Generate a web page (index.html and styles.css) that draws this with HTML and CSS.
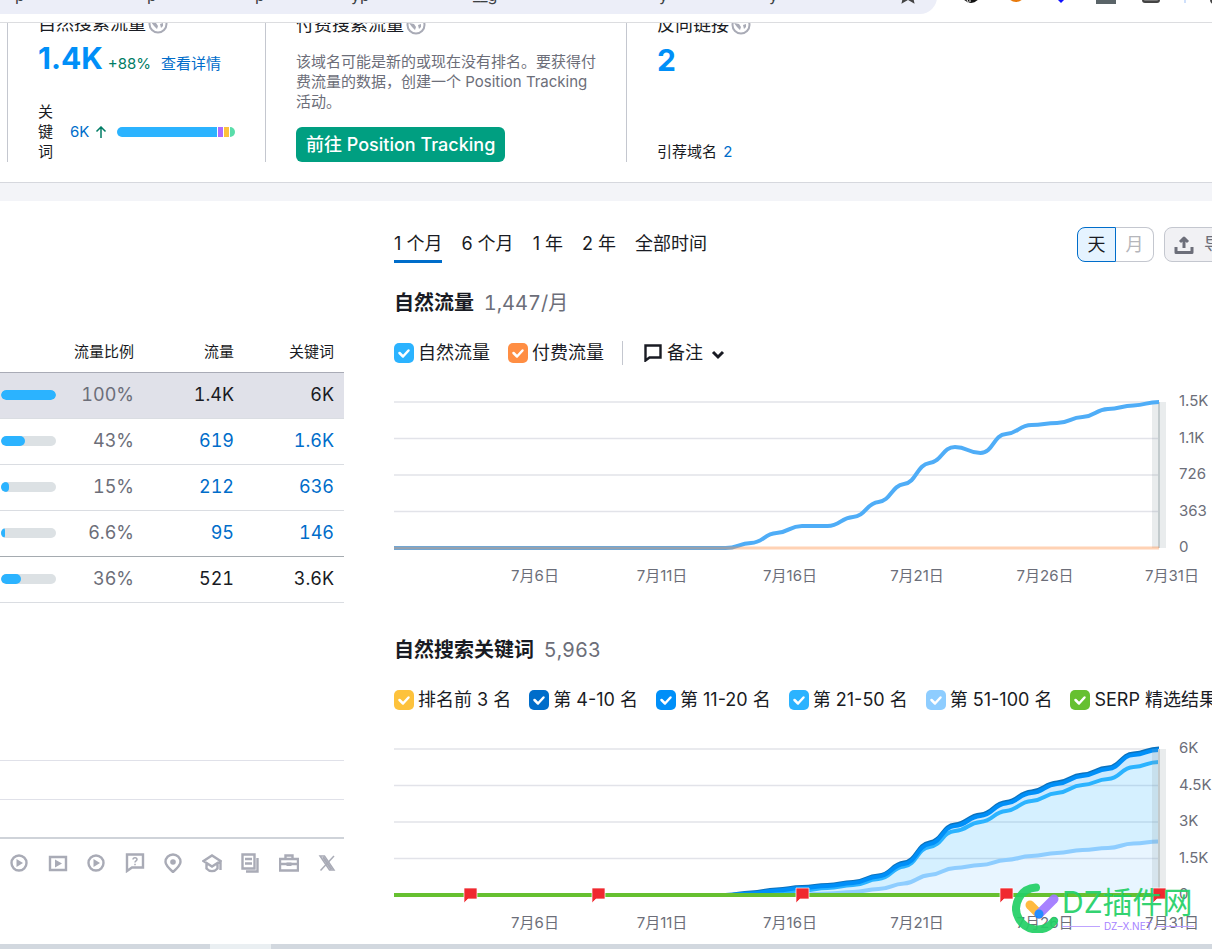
FILE: index.html
```html
<!DOCTYPE html>
<html lang="zh-CN">
<head>
<meta charset="utf-8">
<meta name="viewport" content="width=device-width, initial-scale=1">
<title>域名概览</title>
<link rel="stylesheet" href="styles.css">
</head>
<body>
<div class="toolbar">
  <div class="address">
    <div class="address-text"><span>p</span><span>p</span><span>p</span><span>yp</span><span>__g</span><span>y</span><span>y</span></div>
    <svg class="star" viewBox="0 0 20 20"><path d="M10 2l2.400 5.400 5.900.6-4.500 4 1.300 5.800L10 14.800l-5.100 3 1.300-5.800-4.500-4 5.900-.6z"/></svg>
  </div>
  <div class="extensions">
    <svg viewBox="0 0 24 24"><circle cx="12" cy="13" r="9" fill="#111"/><path d="M8 19l1.500 2.500M11 18v3" stroke="#fff" stroke-width="1"/></svg>
    <svg viewBox="0 0 24 24"><circle cx="12" cy="12" r="9" fill="#e87a0c"/></svg>
    <svg viewBox="0 0 24 24"><path d="M12 4l9 9-9 9-9-9z" fill="#1010ff"/></svg>
    <svg viewBox="0 0 24 24"><path d="M2 3h20v20H2z" fill="#5a6468"/></svg>
    <svg viewBox="0 0 24 24"><rect x="4" y="4" width="16" height="17" rx="2" fill="#777" stroke="#444" stroke-width="2"/></svg>
    <span class="toolbar-rule"></span>
    <svg viewBox="0 0 24 24"><rect x="4" y="4" width="16" height="18" rx="3" fill="none" stroke="#444" stroke-width="2"/></svg>
  </div>
</div>

<section class="summary">
  <div class="metric">
    <h3 class="metric-title">自然搜索流量 <svg class="globe" viewBox="0 0 20 20"><circle cx="10" cy="10" r="8.500"/><path d="M3 8l5 1 2 3-1 3-3-3zM10 3l1 4 3 1 1-3M12 10l3-1v3l-2 2z"/></svg></h3>
    <p class="metric-main"><strong>1.4K</strong><span class="growth">+88%</span><a href="#details">查看详情</a></p>
    <div class="keywords">
      <span class="keywords-label">关键词</span>
      <a href="#keywords">6K</a>
      <svg class="up" viewBox="0 0 12 12"><path d="M6 12V1M1.500 5.500L6 1l4.500 4.500"/></svg>
      <div class="split"><i class="split-blue"></i><i class="split-purple"></i><i class="split-yellow"></i><i class="split-green"></i></div>
    </div>
  </div>
  <div class="metric">
    <h3 class="metric-title">付费搜索流量 <svg class="globe" viewBox="0 0 20 20"><circle cx="10" cy="10" r="8.500"/><path d="M3 8l5 1 2 3-1 3-3-3zM10 3l1 4 3 1 1-3M12 10l3-1v3l-2 2z"/></svg></h3>
    <p class="hint">该域名可能是新的或现在没有排名。要获得付费流量的数据，创建一个 Position Tracking 活动。</p>
    <button class="primary" type="button">前往 Position Tracking</button>
  </div>
  <div class="metric">
    <h3 class="metric-title">反向链接 <svg class="globe" viewBox="0 0 20 20"><circle cx="10" cy="10" r="8.500"/><path d="M3 8l5 1 2 3-1 3-3-3zM10 3l1 4 3 1 1-3M12 10l3-1v3l-2 2z"/></svg></h3>
    <p class="metric-main"><strong>2</strong></p>
    <p class="referring">引荐域名 <a href="#domains">2</a></p>
  </div>
</section>

<main class="report">
  <div class="side">
    <table class="countries">
      <thead><tr><th class="bar-col"></th><th>流量比例</th><th>流量</th><th>关键词</th></tr></thead>
      <tbody>
        <tr class="selected"><td><div class="bar"><i style="width:100%"></i></div></td><td class="share">100%</td><td>1.4K</td><td>6K</td></tr>
        <tr><td><div class="bar"><i style="width:43%"></i></div></td><td class="share">43%</td><td><a href="#c1">619</a></td><td><a href="#k1">1.6K</a></td></tr>
        <tr><td><div class="bar"><i style="width:15%"></i></div></td><td class="share">15%</td><td><a href="#c2">212</a></td><td><a href="#k2">636</a></td></tr>
        <tr class="last-country"><td><div class="bar"><i style="width:6.6%"></i></div></td><td class="share">6.6%</td><td><a href="#c3">95</a></td><td><a href="#k3">146</a></td></tr>
        <tr><td><div class="bar"><i style="width:36%"></i></div></td><td class="share">36%</td><td>521</td><td>3.6K</td></tr>
      </tbody>
    </table>
    <div class="serp">
      <div class="serp-line"></div>
      <div class="serp-line"></div>
      <div class="serp-line serp-axis"></div>
      <div class="serp-icons">
        <svg viewBox="0 0 20 20"><circle cx="10" cy="10" r="7.500"/><path class="solid" d="M7.500 6l6.500 4-6.500 4z"/></svg>
        <svg viewBox="0 0 20 20"><path d="M2 4h16v13H2z"/><path class="solid" d="M7 6.500l7 4-7 4z"/></svg>
        <svg viewBox="0 0 20 20"><circle cx="10" cy="10" r="7.500"/><path class="solid" d="M7.500 6l6.500 4-6.500 4z"/></svg>
        <svg viewBox="0 0 20 20"><path d="M2 1.500h16v13H7L2 18z"/><path class="thin" d="M8 6.500c0-2.500 4-2.500 4 0 0 1.500-2 1.300-2 3M10 10.800v1.400"/></svg>
        <svg viewBox="0 0 20 20"><path d="M10 19C5 14.500 2.500 12 2.500 9a7.500 7.500 0 0 1 15 0c0 3-2.500 5.500-7.500 10z"/><circle class="solid" cx="10" cy="9" r="2.800"/></svg>
        <svg viewBox="0 0 20 20"><path d="M1.500 8L10 2.500 18.500 8 10 13.500zM4.500 11v4.500c3 3.500 8 3.500 11 0V11M18.500 8v9"/></svg>
        <svg viewBox="0 0 20 20"><path d="M2.500 1.500h12v14h-12zM5 6h7M5 10.500h7M17.500 5v13.500H6"/></svg>
        <svg viewBox="0 0 20 20"><path d="M1 6h18v11.500H1zM6.500 6V2.500h7V6M1 11h18"/><path class="solid" d="M7.500 9.500h5v3.500h-5z"/></svg>
        <svg viewBox="0 0 20 20"><path class="thin" d="M17 3L3.500 17.500"/><path class="thin" d="M3 3h4.500l9.500 14h-4.500z"/><path d="M6 4l8.500 12.500"/></svg>
      </div>
    </div>
  </div>

  <div class="charts">
    <div class="controls">
      <div class="tabs" role="tablist">
        <button class="tab active" type="button">1 个月</button>
        <button class="tab" type="button">6 个月</button>
        <button class="tab" type="button">1 年</button>
        <button class="tab" type="button">2 年</button>
        <button class="tab" type="button">全部时间</button>
      </div>
      <div class="switch">
        <button class="switch-on" type="button">天</button><button class="switch-off" type="button" disabled>月</button>
      </div>
      <button class="export" type="button"><svg viewBox="0 0 20 20"><path d="M10 13V3M6 7l4-4 4 4M2 12v5.500h16V12"/></svg>导出</button>
    </div>

    <section class="chart-block">
      <h2>自然流量 <span>1,447/月</span></h2>
      <div class="legend">
        <label><input type="checkbox" class="c-sky" checked>自然流量</label>
        <label><input type="checkbox" class="c-orange" checked>付费流量</label>
        <button class="notes" type="button"><svg class="note-icon" viewBox="0 0 18 18"><path d="M1.500 1.500h15v12H5.500l-4 3z"/></svg>备注<svg class="chevron" viewBox="0 0 14 14"><path d="M2 6l5 5 5-5"/></svg></button>
      </div>
      <svg class="chart" viewBox="0 0 818 206">
        <path class="grid" d="M0 17h765M0 53.500h765M0 90h765M0 126.500h765"/>
        <path class="band" d="M758 17h14v146h-14z"/>
        <path class="cursor" d="M765 17v146"/>
        <path class="line traffic" data-start="0" data-y="163,163,163,163,163,163,163,163,163,163,163,163,163,163,158,148,141,141,132,117,99,78,62,68,49,40,38,32,24,20.5,17"/>
        <path class="paid" d="M0 163h765"/>
        <g class="axis"><text x="785" y="21">1.5K</text><text x="785" y="58">1.1K</text><text x="785" y="94">726</text><text x="785" y="131">363</text><text x="785" y="167">0</text></g>
        <g class="axis days"><text x="141" y="196">7月6日</text><text x="268" y="196">7月11日</text><text x="396" y="196">7月16日</text><text x="523" y="196">7月21日</text><text x="651" y="196">7月26日</text><text x="778" y="196">7月31日</text></g>
      </svg>
    </section>

    <section class="chart-block">
      <h2>自然搜索关键词 <span>5,963</span></h2>
      <div class="legend">
        <label><input type="checkbox" class="c-yellow" checked>排名前 3 名</label>
        <label><input type="checkbox" class="c-navy" checked>第 4-10 名</label>
        <label><input type="checkbox" class="c-blue" checked>第 11-20 名</label>
        <label><input type="checkbox" class="c-sky" checked>第 21-50 名</label>
        <label><input type="checkbox" class="c-pale" checked>第 51-100 名</label>
        <label><input type="checkbox" class="c-green" checked>SERP 精选结果</label>
      </div>
      <div class="chart-wrap">
        <svg class="chart" viewBox="0 0 818 206">
          <path class="grid" d="M0 17h765M0 53.500h765M0 90h765M0 126.500h765"/>
          <path class="area top" data-start="13" data-lower="l50" data-y="163,161.500,158.500,156,154,151,144.500,132,112,94,84,71.500,61,52,44,37,23,18"/>
          <path class="area mid" data-start="13" data-lower="l100" data-y="163,162.500,160.500,158.500,156,153,147,134.500,115,99,90,79,69,61,53,47,35,30"/>
          <path class="area low" data-start="13" data-y="163,163,163,162.500,161.500,160,157,151.500,143,136,133,128,124,121,118,116,111.500,109.500"/>
          <path class="line edge" data-start="13" data-y="163,160.500,157.500,155,153,150,143.500,130.500,110.500,92.500,82.500,70,59.500,50.500,42.500,35.500,21.500,16.500"/>
          <path class="line pale" id="l100" data-start="13" data-y="163,163,163,162.500,161.500,160,157,151.500,143,136,133,128,124,121,118,116,111.500,109.500"/>
          <path class="line sky" id="l50" data-start="13" data-y="163,162.500,160.500,158.500,156,153,147,134.500,115,99,90,79,69,61,53,47,35,30"/>
          <path class="line blue" data-start="13" data-y="163,161.500,158.500,156,154,151,144.500,132,112,94,84,71.500,61,52,44,37,23,18"/>
          <path class="band" d="M758 17h14v146h-14z"/>
          <path class="cursor" d="M765 17v146"/>
          <path class="features" d="M0 163h765"/>
          <g class="flags">
            <path d="M70 156h13v11H74l-4 4z"/><path d="M198 156h13v11h-9l-4 4z"/><path d="M402 156h13v11h-9l-4 4z"/><path d="M606 156h13v11h-9l-4 4z"/><path d="M759 156h13v11h-9l-4 4z"/>
          </g>
          <g class="axis"><text x="785" y="21">6K</text><text x="785" y="58">4.5K</text><text x="785" y="94">3K</text><text x="785" y="131">1.5K</text><text x="785" y="167">0</text></g>
          <g class="axis days"><text x="141" y="196">7月6日</text><text x="268" y="196">7月11日</text><text x="396" y="196">7月16日</text><text x="523" y="196">7月21日</text><text x="651" y="196">7月26日</text><text x="778" y="196">7月31日</text></g>
        </svg>
        <div class="watermark">
          <svg viewBox="0 0 50 50"><path d="M24 4.500A21 21 0 1 0 42 38" fill="none" stroke="#22d066" stroke-width="8" stroke-linecap="round"/><path d="M18 22l9 9" stroke="#ffb530" stroke-width="9" stroke-linecap="round"/><path d="M27 31l15-15" stroke="#a078ff" stroke-width="9" stroke-linecap="round"/><circle cx="27" cy="31" r="4.500" fill="#1484ff"/></svg>
          <div class="watermark-text"><b>DZ插件网</b><small>DZ–X.NET</small></div>
        </div>
      </div>
    </section>
  </div>
</main>
<div class="taskbar"><i></i></div>
<script src="charts.js"></script>
</body>
</html>
```

FILE: styles.css
```css
* { box-sizing: border-box; }

body {
  margin: 0;
  min-height: 100vh;
  display: flex;
  flex-direction: column;
  overflow: hidden;
  background: #fff;
  color: #191b23;
  font-family: Inter, "Noto Sans CJK SC", sans-serif;
  font-size: 15px;
  line-height: 20px;
}

a { color: #006dca; text-decoration: none; }
button, input { font: inherit; color: inherit; margin: 0; }
button { cursor: pointer; }
h2, h3, p { margin: 0; }
svg { display: block; flex: none; }

/* Browser toolbar, scrolled partly out of view */
.toolbar {
  height: 43px;
  margin-top: -20px;
  display: flex;
  border-bottom: 1px solid #dcdde0;
}
.address {
  flex: 0 0 937px;
  height: 34px;
  padding-right: 19px;
  display: flex;
  justify-content: space-between;
  background: #eceef8;
  border-radius: 0 17px 17px 0;
}
.address-text {
  display: grid;
  grid-template-columns: 132px 108px 96px 122px 186px 110px 20px;
  padding-left: 15px;
  color: #3c4043;
  font-size: 16px;
  line-height: 30px;
}
.star { width: 20px; height: 20px; margin-top: 4px; fill: none; stroke: #444; stroke-width: 2; }
.extensions { display: flex; gap: 21px; padding: 1px 0 0 22px; }
.extensions svg { width: 24px; height: 24px; }
.toolbar-rule { width: 2px; height: 22px; background: #cfe0fb; }

/* Domain summary */
.summary {
  display: grid;
  grid-template-columns: 258px 361px 1fr;
  padding: 0 0 20px 7px;
  border-bottom: 1px solid #d6d8de;
  overflow: hidden;
}
.metric {
  height: 139px;
  padding: 0 30px;
  border-left: 1px solid #c4c7cf;
  display: flex;
  flex-direction: column;
}
.metric-title {
  display: flex;
  align-items: center;
  gap: 2px;
  height: 22px;
  margin-top: -9px;
  font-size: 18px;
  font-weight: 400;
}
.globe { width: 20px; height: 20px; fill: #a9abb6; }
.globe circle { fill: none; stroke: #a9abb6; stroke-width: 2; }
.metric-main { display: flex; align-items: baseline; margin-top: 8px; line-height: 32px; }
.metric-main strong { color: #008ff8; font-size: 30px; font-weight: 700; }
.metric-main a { margin-left: 10px; }
.growth { margin-left: 5px; color: #007c65; }
.keywords { display: flex; align-items: center; margin-top: 22px; height: 60px; }
.keywords-label { width: 15px; margin-right: 17px; }
.up { width: 12px; height: 12px; margin: 0 10px 0 6px; fill: none; stroke: #007c65; stroke-width: 1.500; }
.split { display: flex; gap: 1px; width: 118px; height: 10px; border-radius: 5px; overflow: hidden; }
.split i { width: 5px; }
.split .split-blue { flex: 1; background: #2bb3ff; }
.split-purple { background: #ab6cfe; }
.split-yellow { background: #fdc23c; }
.split-green { background: #59ddaa; }
.hint { margin-top: 16px; color: #6c6e79; }
.primary {
  align-self: flex-start;
  height: 35px;
  margin-top: auto;
  padding: 0 10px;
  border: 0;
  border-radius: 6px;
  background: #009f81;
  color: #fff;
  font-size: 18px;
  font-weight: 500;
}
.referring { margin-top: auto; }
.referring a { margin-left: 2px; }

/* Report */
.report {
  flex: 1;
  display: grid;
  grid-template-columns: 344px minmax(0, 1fr);
  gap: 50px;
  border-top: 18px solid #f3f4f8;
  padding-top: 26px;
}
.side { padding-top: 104px; }
.countries {
  width: 100%;
  border-collapse: collapse;
  table-layout: fixed;
  font-variant-numeric: tabular-nums;
}
.countries th {
  height: 41px;
  padding: 2px 10px 0 0;
  border-bottom: 1px solid #a9abb6;
  font-weight: 400;
  text-align: right;
  white-space: nowrap;
}
.countries .bar-col { width: 57px; }
.countries th:nth-child(2) { width: 87px; }
.countries th:nth-child(3) { width: 100px; }
.countries td {
  height: 46px;
  padding: 0 10px 0 0;
  border-bottom: 1px solid #dadde2;
  font-size: 18px;
  text-align: right;
}
.countries td:first-child { padding: 0 1px; }
.countries .share { color: #6c6e79; }
.selected { background: #e0e1e9; }
.countries .last-country td { border-bottom-color: #a5abb0; }
.bar { height: 10px; border-radius: 5px; background: #dce1e4; overflow: hidden; }
.bar i { display: block; height: 10px; border-radius: 5px; background: #2bb3ff; }

.serp { margin-top: 119px; }
.serp-line { height: 39px; border-bottom: 1px solid #e0e1e9; }
.serp-axis { border-bottom: 2px solid #cfd3d9; }
.serp-icons { display: flex; justify-content: space-between; padding: 14px 7px 0 9px; }
.serp-icons svg { width: 20px; height: 20px; fill: none; stroke: #a9abb6; stroke-width: 2.400; }
.serp-icons .solid { fill: #a9abb6; stroke: none; }
.serp-icons .thin { stroke-width: 1.500; }

.controls {
  display: flex;
  align-items: flex-start;
  gap: 10px;
  height: 35px;
  margin-right: -48px;
  font-size: 18px;
}
.tabs { display: flex; flex: 1; gap: 19px; }
.tab { height: 36px; padding: 0; border: 0; border-bottom: 3px solid transparent; background: none; }
.tab.active { border-bottom-color: #006dca; }
.switch { display: flex; }
.switch button { width: 39px; height: 35px; padding: 0; border: 1px solid #c4c7cf; background: #fff; }
.switch .switch-on { border-color: #006dca; border-radius: 8px 0 0 8px; background: #e5f3ff; }
.switch .switch-off { width: 38px; border-left: 0; border-radius: 0 8px 8px 0; color: #b5b6bb; }
.export {
  display: flex;
  align-items: center;
  gap: 10px;
  width: 96px;
  height: 35px;
  padding: 0 9px;
  border: 1px solid #c4c7cf;
  border-radius: 8px;
  background: #f1f1f4;
  color: #6c6e79;
  white-space: nowrap;
}
.export svg { width: 20px; height: 20px; fill: none; stroke: #6c6e79; stroke-width: 3; stroke-linejoin: round; }

.chart-block { padding-top: 27px; }
.chart-block + .chart-block { padding-top: 45px; }
.chart-block h2 { font-size: 20px; font-weight: 700; line-height: 28px; }
.chart-block h2 span {
  margin-left: 5px;
  color: #6c6e79;
  font-weight: 400;
  font-variant-numeric: tabular-nums;
}
.legend {
  display: flex;
  gap: 18px;
  height: 24px;
  margin: 24px 0 20px;
  font-size: 18px;
  line-height: 24px;
  white-space: nowrap;
}
.legend label { display: flex; align-items: center; gap: 4px; }
.legend input {
  appearance: none;
  width: 20px;
  height: 20px;
  border-radius: 5px;
  background: center / 20px url("data:image/svg+xml,%3Csvg xmlns='http://www.w3.org/2000/svg' viewBox='0 0 20 20'%3E%3Cpath d='M5.500 10l3.500 3.500 5.500-6' fill='none' stroke='white' stroke-width='2.500' stroke-linecap='round' stroke-linejoin='round'/%3E%3C/svg%3E");
}
.legend .c-sky { background-color: #2bb3ff; }
.legend .c-orange { background-color: #ff8e43; }
.legend .c-yellow { background-color: #fdc23c; }
.legend .c-navy { background-color: #006dca; }
.legend .c-blue { background-color: #008ff8; }
.legend .c-pale { background-color: #8ecdff; }
.legend .c-green { background-color: #66c030; }
.notes {
  display: flex;
  align-items: center;
  gap: 5px;
  padding: 0 0 0 21px;
  border: 0;
  border-left: 1px solid #c4c7cf;
  background: none;
}
.note-icon { width: 18px; height: 18px; fill: none; stroke: #191b23; stroke-width: 2.400; }
.chevron { width: 14px; height: 14px; margin-left: 3px; fill: none; stroke: #191b23; stroke-width: 3; }

.chart { width: 100%; overflow: visible; }
.grid { fill: none; stroke: #e2e3e9; stroke-width: 1.500; }
.band { fill: #8a9a9d; fill-opacity: 0.19; }
.cursor { stroke: #c3cbcd; stroke-width: 2; }
.line { fill: none; stroke-width: 4; }
.traffic { stroke: #4fadf7; }
.paid { stroke: #ff8e43; stroke-opacity: 0.4; stroke-width: 3; }
.area { stroke: none; }
.area.top { fill: #008ff8; fill-opacity: 0.2; }
.area.mid { fill: #2bb3ff; fill-opacity: 0.2; }
.area.low { fill: #8ecdff; fill-opacity: 0.2; }
.edge { stroke: #0c72bd; }
.blue { stroke: #008ff8; }
.sky { stroke: #2bb3ff; }
.pale { stroke: #8ecdff; }
.features { stroke: #66c030; stroke-width: 4; }
.flags { fill: #f0292f; stroke: #fff; stroke-opacity: 0.7; stroke-width: 1; }
.axis { fill: #6c6e79; font-size: 15px; }
.days { text-anchor: middle; }

.chart-wrap { position: relative; }
.watermark { position: absolute; right: 18px; top: 151px; display: flex; opacity: 0.92; }
.watermark svg { width: 50px; height: 50px; }
.watermark-text { display: flex; flex-direction: column; width: 132px; white-space: nowrap; }
.watermark-text b { color: #22d066; font-size: 30px; font-weight: 400; line-height: 38px; }
.watermark-text small {
  display: flex;
  align-items: center;
  gap: 4px;
  color: #a078ff;
  font-size: 10px;
  line-height: 10px;
}
.watermark-text small::before, .watermark-text small::after { content: ""; flex: 1; height: 1px; background: #b99cff; }

.taskbar { height: 5px; background: #d2d8df; }
.taskbar i { display: block; width: 61px; height: 5px; margin-left: 210px; background: #eaeff2; }
```

FILE: charts.js
```js
// Builds the smoothed chart curves from the daily values held in data-y.
const STEP = 25.5;
const BASE = 163;

function points(el) {
  const start = Number(el.dataset.start);
  return el.dataset.y.split(",").map((y, i) => [(start + i) * STEP, Number(y)]);
}

function curve(pts) {
  const slope = pts.map((p, i) => {
    if (i === 0 || i === pts.length - 1) return 0;
    const a = p[1] - pts[i - 1][1];
    const b = pts[i + 1][1] - p[1];
    if (a * b <= 0) return 0;
    return 0.2 * Math.sign(a) * Math.min(Math.abs(a), Math.abs(b));
  });
  const h = 0.5;
  let d = "";
  for (let i = 1; i < pts.length; i++) {
    const [x0, y0] = pts[i - 1];
    const [x1, y1] = pts[i];
    d += `C${x0 + STEP * h} ${y0 + slope[i - 1] * h} ${x1 - STEP * h} ${y1 - slope[i] * h} ${x1} ${y1}`;
  }
  return `M${pts[0][0]} ${pts[0][1]}${d}`;
}

document.querySelectorAll("path[data-y]").forEach((el) => {
  const pts = points(el);
  let d = curve(pts);
  if (el.classList.contains("area")) {
    const lower = el.dataset.lower && document.getElementById(el.dataset.lower);
    if (lower) {
      d += points(lower).reverse().map((p) => `L${p[0]} ${p[1]}`).join("");
    } else {
      d += `V${BASE}H${pts[0][0]}`;
    }
    d += "Z";
  }
  el.setAttribute("d", d);
});
```
